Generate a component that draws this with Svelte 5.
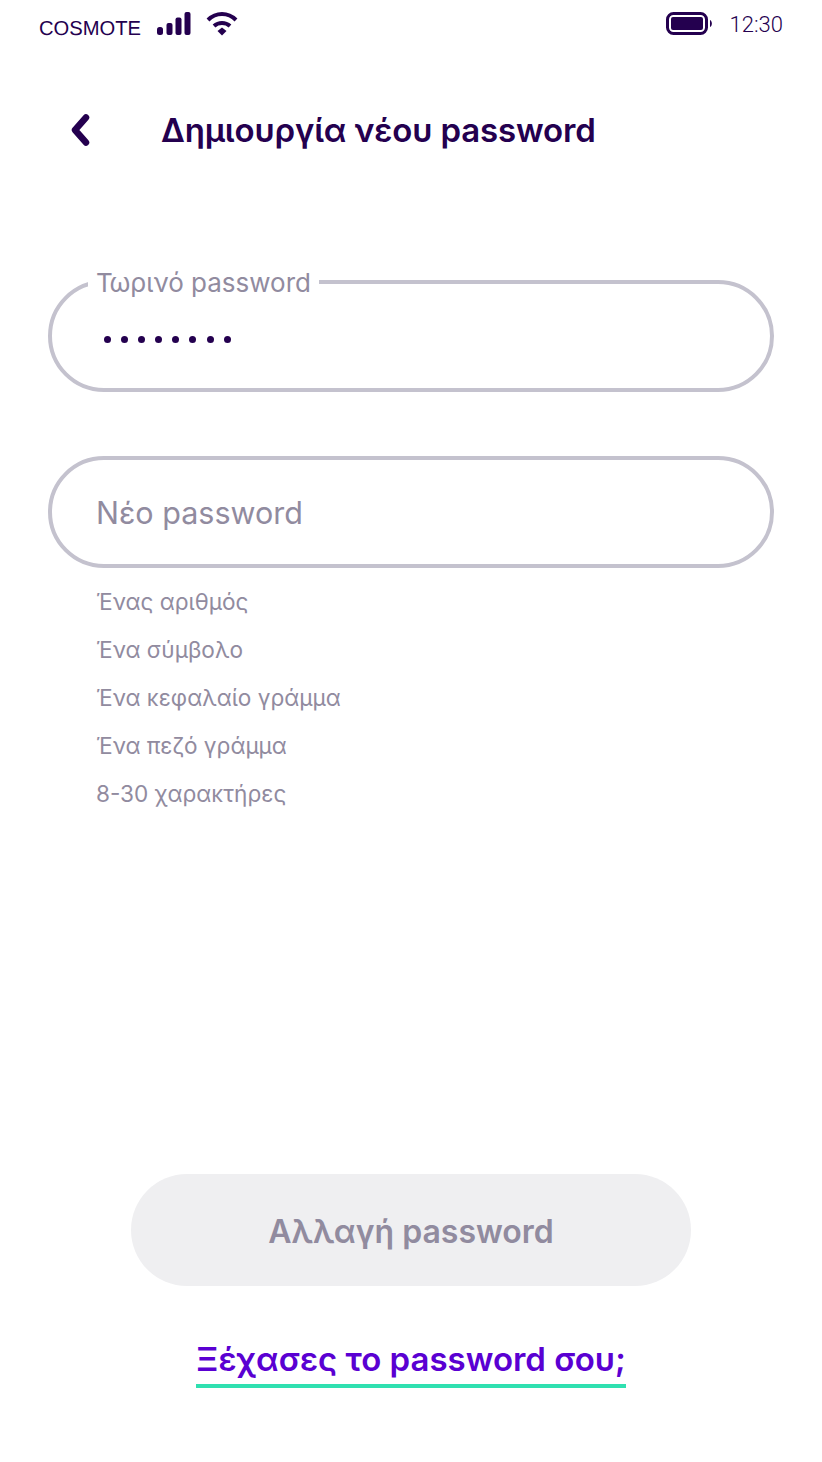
<script>
    const hints = ['Ένας αριθμός', 'Ένα σύμβολο', 'Ένα κεφαλαίο γράμμα', 'Ένα πεζό γράμμα', '8-30 χαρακτήρες'];
</script>

<div class="screen">
    <div class="status">
        <div class="status-left">
            <span class="carrier">COSMOTE</span>
            <svg class="signal" width="35" height="24" viewBox="0 0 35 24" fill="#24004f">
                <rect x="1" y="15" width="6" height="8" rx="2.500" />
                <rect x="10.500" y="11" width="6" height="12" rx="2" />
                <rect x="19.500" y="5.500" width="6" height="17.500" rx="2" />
                <rect x="28.500" y="0" width="6" height="23" rx="2" />
            </svg>
            <svg class="wifi" width="32" height="26" viewBox="0 0 32 26" fill="none" stroke="#24004f" stroke-width="4">
                <path d="M2 9 C10 1 22 1 30 9" />
                <path d="M8 15 C12.500 11 19.500 11 24 15" />
                <path d="M11.500 20 L16 16.500 L20.500 20 L16 24.500 Z" fill="#24004f" stroke="none" />
            </svg>
        </div>
        <div class="status-right">
            <svg class="battery" width="47" height="24" viewBox="0 0 47 24" fill="none">
                <rect x="1.500" y="1.500" width="39" height="20" rx="6" stroke="#24004f" stroke-width="3" />
                <rect x="5" y="5" width="32" height="13" rx="2" fill="#24004f" />
                <path d="M44 8 C46.500 9 46.500 14 44 15 Z" fill="#24004f" />
            </svg>
            <span class="time">12:30</span>
        </div>
    </div>

    <div class="header">
        <button class="back" aria-label="Πίσω">
            <svg width="20" height="32" viewBox="0 0 20 32" fill="none" stroke="#24004f" stroke-width="6.500" stroke-linecap="round" stroke-linejoin="round">
                <path d="M16 3.500 L5 16 L16 28.500" />
            </svg>
        </button>
        <h1>Δημιουργία νέου password</h1>
    </div>

    <div class="field filled">
        <span class="legend">Τωρινό password</span>
        <div class="dots">
            {#each Array(8) as _}
                <i></i>
            {/each}
        </div>
    </div>

    <div class="field second">
        <span class="placeholder">Νέο password</span>
    </div>

    <ul class="hints">
        {#each hints as hint}
            <li>{hint}</li>
        {/each}
    </ul>

    <div class="actions">
        <button class="submit" disabled>Αλλαγή password</button>
        <a class="forgot" href="#forgot">Ξέχασες το password σου;</a>
    </div>
</div>

<style>
    :global(body) {
        margin: 0;
        background: #ffffff;
    }

    .screen {
        width: 822px;
        height: 1462px;
        font-family: Inter, "Noto Sans", sans-serif;
        color: #24004f;
        display: flex;
        flex-direction: column;
        overflow: hidden;
    }

    .status {
        display: flex;
        justify-content: space-between;
        padding: 11px 39px 0 39px;
        height: 39px;
    }

    .status-left, .status-right {
        display: flex;
        align-items: flex-start;
    }

    .carrier {
        font-family: "Liberation Sans", sans-serif;
        font-size: 20.200px;
        line-height: 24px;
        margin-top: 6px;
        text-rendering: geometricPrecision;
    }

    .signal {
        margin: 1px 0 0 15px;
    }

    .wifi {
        margin: 0 0 0 15px;
    }

    .battery {
        margin-top: 1px;
    }

    .time {
        font-family: Roboto, sans-serif;
        font-size: 22px;
        font-weight: 300;
        line-height: 26px;
        margin: 1px 0 0 17px;
    }

    .header {
        display: flex;
        align-items: center;
        height: 50px;
        margin-top: 55px;
        padding-left: 70px;
    }

    .back {
        border: none;
        background: none;
        padding: 0;
        width: 91px;
        height: 32px;
        text-align: left;
    }

    h1 {
        margin: 0;
        font-size: 33px;
        font-weight: 600;
        letter-spacing: -0.150px;
    }

    .field {
        width: 726px;
        height: 112px;
        box-sizing: border-box;
        margin-left: 48px;
        border: 4px solid #c4c2ce;
        border-radius: 56px;
        position: relative;
    }

    .filled {
        margin-top: 125px;
    }

    .second {
        margin-top: 64px;
        display: flex;
        align-items: center;
        padding-left: 44px;
    }

    .legend {
        position: absolute;
        left: 36px;
        top: -17px;
        background: #ffffff;
        padding: 0 8px;
        font-size: 26px;
        line-height: 32px;
        color: #918b9f;
    }

    .dots {
        display: flex;
        gap: 10.100px;
        padding: 52px 0 0 52px;
    }

    .dots i {
        width: 7px;
        height: 7px;
        border-radius: 50%;
        background: #24004f;
    }

    .placeholder {
        font-size: 30.500px;
        color: #918b9f;
    }

    .hints {
        list-style: none;
        margin: 10px 0 0 96px;
        padding: 0;
        font-size: 22.600px;
        line-height: 48px;
        color: #918b9f;
    }

    .actions {
        margin-top: 356px;
        display: flex;
        flex-direction: column;
        align-items: center;
    }

    .submit {
        width: 560px;
        height: 112px;
        padding: 3px 0 0;
        border: none;
        border-radius: 56px;
        background: #efeff1;
        color: #918b9f;
        font: 600 32px Inter, "Noto Sans", sans-serif;
    }

    .forgot {
        margin-top: 48px;
        font-size: 33px;
        line-height: 50px;
        font-weight: 600;
        color: #5a00d2;
        text-decoration: none;
        border-bottom: 4px solid #2fe0b0;
    }
</style>
